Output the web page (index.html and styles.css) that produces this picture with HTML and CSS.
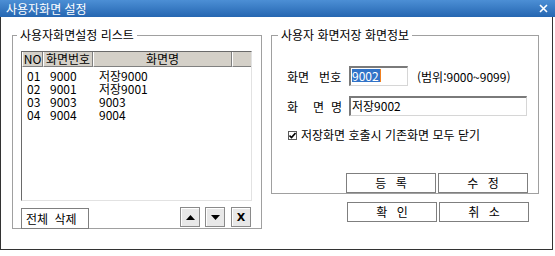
FILE: index.html
```html
<!DOCTYPE html>
<html lang="ko">
<head>
    <meta charset="UTF-8">
    <title>사용자화면 설정</title>
    <link rel="stylesheet" href="styles.css">
</head>
<body>
    <div class="titlebar">
        <span class="title">사용자화면 설정</span>
        <svg class="close" width="9" height="9" viewBox="0 0 9 9">
            <path d="M1 1 L8 8 M8 1 L1 8" stroke="#fff" stroke-width="1.6"/>
        </svg>
    </div>

    <div class="frame">
        <div class="content">
            <!-- 왼쪽: 리스트 -->
            <fieldset class="group group-list">
                <legend>사용자화면설정 리스트</legend>
                <div class="listview">
                    <div class="lv-head">
                        <span class="c-no">NO</span>
                        <span class="c-id">화면번호</span>
                        <span class="c-name">화면명</span>
                        <span class="c-rest"></span>
                    </div>
                    <div class="lv-body">
                        <div class="lv-row"><span class="c-no">01</span><span class="c-id">9000</span><span class="c-name">저장9000</span></div>
                        <div class="lv-row"><span class="c-no">02</span><span class="c-id">9001</span><span class="c-name">저장9001</span></div>
                        <div class="lv-row"><span class="c-no">03</span><span class="c-id">9003</span><span class="c-name">9003</span></div>
                        <div class="lv-row"><span class="c-no">04</span><span class="c-id">9004</span><span class="c-name">9004</span></div>
                    </div>
                </div>
                <div class="list-actions">
                    <button class="btn btn-clear">전체 삭제</button>
                    <div class="arrows">
                        <button class="btn-sq">
                            <svg width="9" height="5" viewBox="0 0 9 5"><path d="M0 5 L4.5 0 L9 5 Z" fill="#000"/></svg>
                        </button>
                        <button class="btn-sq">
                            <svg width="9" height="5" viewBox="0 0 9 5"><path d="M0 0 L9 0 L4.5 5 Z" fill="#000"/></svg>
                        </button>
                        <button class="btn-sq btn-x">X</button>
                    </div>
                </div>
            </fieldset>

            <!-- 오른쪽: 화면정보 -->
            <div class="right-col">
                <fieldset class="group group-info">
                    <legend>사용자 화면저장 화면정보</legend>
                    <div class="form-row row-id">
                        <label class="lbl"><span>화면</span><span class="w2">번호</span></label>
                        <div class="input input-id"><span class="sel">9002</span></div>
                        <span class="range">(범위:9000~9099)</span>
                    </div>
                    <div class="form-row row-name">
                        <label class="lbl"><span>화</span><span class="w-m">면</span><span class="w-n">명</span></label>
                        <div class="input input-name">저장9002</div>
                    </div>
                    <div class="check-row">
                        <span class="checkbox">
                            <svg width="7" height="7" viewBox="0 0 7 7"><path d="M0.5 3.5 L2.5 5.5 L6.5 1" stroke="#000" stroke-width="1.6" fill="none"/></svg>
                        </span>
                        <span>저장화면 호출시 기존화면 모두 닫기</span>
                    </div>
                    <div class="btn-row">
                        <button class="btn btn-wide">등 록</button>
                        <button class="btn btn-wide">수 정</button>
                    </div>
                </fieldset>
                <div class="btn-row dlg-buttons">
                    <button class="btn btn-wide">확 인</button>
                    <button class="btn btn-wide">취 소</button>
                </div>
            </div>
        </div>
    </div>
</body>
</html>
```

FILE: styles.css
```css
/* 기본 */
body {
    margin: 0;
    background-color: #fff;
    font-family: "Noto Sans CJK KR", "Noto Sans", sans-serif;
    font-size: 12px;
    color: #000;
}

button {
    font-family: inherit;
    font-size: 12px;
    color: #000;
    padding: 0;
    margin: 0;
    cursor: pointer;
}

/* 타이틀바 */
.titlebar {
    width: 555px;
    height: 17px;
    box-sizing: border-box;
    padding: 0 7px 0 6px;
    display: flex;
    align-items: center;
    justify-content: space-between;
    background: linear-gradient(#4c8fd5, #2566b1);
    color: #fff;
    line-height: 14px;
}

.close {
    display: block;
}

/* 창 본문 */
.frame {
    width: 553px;
    height: 233px;
    box-sizing: border-box;
    border: 1px solid #333;
    border-top: none;
}

.content {
    display: flex;
    gap: 9px;
    padding: 11px 0 0 11px;
}

/* 그룹박스 */
fieldset.group {
    margin: 0;
    padding: 0;
    min-width: 0;
    border: 1px solid #a0a0a0;
    box-sizing: border-box;
}

fieldset.group legend {
    line-height: 14px;
    padding: 0 3px;
}

.group-list {
    width: 250px;
    padding-bottom: 8px;
}

.group-list legend {
    margin-left: 4px;
}

/* 리스트뷰 */
.listview {
    width: 231px;
    height: 150px;
    margin: 9px 0 0 8px;
    box-sizing: border-box;
    border-top: 1px solid #6a6a6a;
    border-left: 1px solid #6a6a6a;
    border-right: 1px solid #e2e2e2;
    border-bottom: 1px solid #e2e2e2;
    background-color: #fff;
}

.lv-head {
    display: flex;
    height: 15px;
    line-height: 14px;
    background-color: #d4d0c8;
}

.lv-head span {
    box-sizing: border-box;
    text-align: center;
    border-right: 1px solid #808080;
    border-left: 1px solid #fff;
    border-bottom: 1px solid #808080;
}

.lv-head .c-rest {
    flex: 1;
    border-right: none;
}

.c-no {
    width: 21px;
}

.c-id {
    width: 50px;
}

.c-name {
    width: 139px;
}

.lv-body {
    padding-top: 2px;
}

.lv-row {
    display: flex;
    line-height: 13px;
    height: 13px;
}

.lv-row span {
    box-sizing: border-box;
}

.lv-row .c-no {
    padding-left: 5px;
}

.lv-row .c-id {
    padding-left: 7px;
}

.lv-row .c-name {
    padding-left: 6px;
}

/* 리스트 아래 버튼 */
.list-actions {
    display: flex;
    justify-content: space-between;
    align-items: flex-start;
    margin: 6px 10px 0 8px;
    height: 21px;
}

.btn {
    background-color: #fff;
    border: 1px solid #7f7f7f;
    line-height: 18px;
}

.btn-clear {
    width: 68px;
    height: 21px;
    margin-top: 1px;
    text-align: left;
    padding-left: 4px;
    word-spacing: 3px;
}

.arrows {
    display: flex;
    gap: 5px;
}

.btn-sq {
    width: 20px;
    height: 20px;
    display: flex;
    align-items: center;
    justify-content: center;
    background-color: #e8e8e8;
    border: 1px solid #8a8a8a;
    box-shadow: inset 1px 1px 0 #fff;
}

.btn-x {
    margin-left: 1px;
    font-family: "DejaVu Sans", sans-serif;
    font-weight: bold;
    font-size: 11px;
}

/* 오른쪽 */
.right-col {
    width: 268px;
}

.group-info {
    width: 268px;
    padding-bottom: 8px;
}

.group-info legend {
    margin-left: 6px;
}

.form-row {
    display: flex;
    align-items: center;
    height: 20px;
    margin-left: 15px;
}

.row-id {
    margin-top: 24px;
}

.row-name {
    margin-top: 10px;
}

.lbl {
    display: flex;
    width: 62px;
}

.lbl .w2 {
    margin-left: 10px;
}

.lbl .w-m {
    margin-left: 15px;
}

.lbl .w-n {
    margin-left: 7px;
}

.input {
    height: 20px;
    box-sizing: border-box;
    border-top: 2px solid #7a7a7a;
    border-left: 2px solid #7a7a7a;
    border-right: 1px solid #d6d6d6;
    border-bottom: 1px solid #d6d6d6;
    line-height: 15px;
    padding-left: 1px;
    background-color: #fff;
}

.input-id {
    width: 59px;
}

.input-name {
    width: 178px;
}

.sel {
    display: inline-block;
    background-color: #3173c8;
    color: #fff;
    line-height: 13px;
    padding-right: 1px;
    border-right: 1px solid #f08020;
}

.range {
    margin-left: 9px;
}

.check-row {
    display: flex;
    align-items: center;
    gap: 4px;
    height: 14px;
    line-height: 14px;
    margin: 12px 0 0 16px;
}

.checkbox {
    width: 9px;
    height: 9px;
    box-sizing: border-box;
    border: 1px solid #5a5a5a;
    display: flex;
    align-items: center;
    justify-content: center;
}

.btn-row {
    display: flex;
    gap: 2px;
    justify-content: flex-end;
    margin: 31px 10px 0 0;
}

.btn-wide {
    width: 90px;
    height: 20px;
    word-spacing: 6px;
}

.dlg-buttons {
    margin-top: 8px;
    margin-right: 10px;
}
```
